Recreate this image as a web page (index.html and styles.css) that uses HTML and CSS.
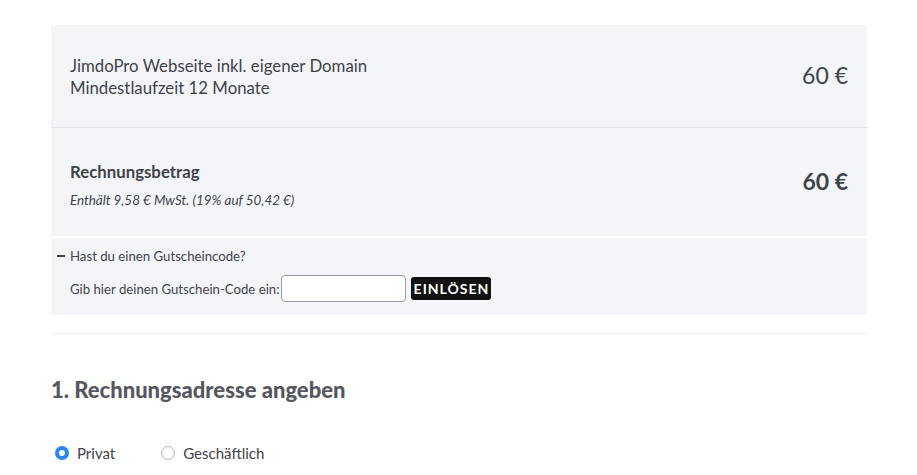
FILE: index.html
```html
<html>
  <head>
    <link rel="stylesheet" href="styles.css">
    <title>Checkout</title>
  </head>
  <body>
    <div class="summary">
      <div class="row item">
        <div class="desc">
          <div>JimdoPro Webseite inkl. eigener Domain</div>
          <div>Mindestlaufzeit 12 Monate</div>
        </div>
        <div class="price">60 €</div>
      </div>
      <div class="row total">
        <div class="desc">
          <div class="label">Rechnungsbetrag</div>
          <div class="tax">Enthält 9,58 € MwSt. (19% auf 50,42 €)</div>
        </div>
        <div class="price">60 €</div>
      </div>
    </div>
    <div class="voucher">
      <div class="toggle"><span class="dash"></span>Hast du einen Gutscheincode?</div>
      <form class="code">
        <label>Gib hier deinen Gutschein-Code ein:</label>
        <input type="text">
        <button type="button">Einlösen</button>
      </form>
    </div>
    <hr class="divider">
    <h2>1. Rechnungsadresse angeben</h2>
    <div class="choices">
      <label class="choice"><span class="radio on"></span>Privat</label>
      <label class="choice"><span class="radio"></span>Geschäftlich</label>
    </div>
  </body>
</html>
```

FILE: styles.css
```css
body {
  margin: 0;
  padding: 25px 50px 0 51px;
  font-family: Lato, "Liberation Sans", sans-serif;
  color: #3f4349;
}

.summary {
  background: #f4f5f9;
}

.row {
  display: flex;
  justify-content: space-between;
  align-items: center;
  padding: 0 19px;
}

.item {
  height: 102px;
  border-bottom: 1px solid #e3e4ee;
  font-size: 16.8px;
  line-height: 22px;
}

.item .desc {
  padding-top: 2px;
}

.item .price {
  font-size: 23px;
  margin-top: -3px;
}

.total {
  height: 108px;
}

.total .desc {
  padding-top: 5px;
}

.total .label {
  font-size: 16.8px;
  font-weight: bold;
  line-height: 20px;
}

.total .tax {
  font-size: 13.4px;
  font-style: italic;
  margin-top: 10px;
}

.total .price {
  font-size: 23px;
  font-weight: bold;
  margin-top: -3px;
}

.voucher {
  background: #f4f5f9;
  margin-top: 2px;
  height: 77px;
  padding: 0 0 0 6px;
  font-size: 13.2px;
  box-sizing: border-box;
}

.toggle {
  display: flex;
  align-items: center;
  padding-top: 10px;
  line-height: 16px;
}

.dash {
  display: inline-block;
  width: 8px;
  height: 2px;
  background: #3f4349;
  margin-right: 5px;
}

.code {
  display: flex;
  align-items: center;
  margin: 11px 0 0 13px;
}

.code label {
  margin-right: 2px;
}

.code input {
  width: 125px;
  height: 27px;
  box-sizing: border-box;
  border: 1px solid #9a9ca3;
  border-radius: 4px;
  background: #fff;
  margin: 0 5px 0 0;
}

.code button {
  height: 23px;
  width: 80px;
  background: #111;
  color: #fff;
  border: none;
  border-radius: 3px;
  font-family: Lato, "Liberation Sans", sans-serif;
  font-weight: bold;
  font-size: 14px;
  letter-spacing: 1px;
  text-transform: uppercase;
  padding: 0;
}

.divider {
  border: none;
  border-top: 1px solid #f0f0f5;
  margin: 18px 0 0;
}

h2 {
  font-size: 22px;
  font-weight: 900;
  color: #55585e;
  margin: 42px 0 0;
  line-height: 28px;
}

.choices {
  display: flex;
  margin-top: 40px;
  font-size: 15px;
}

.choice {
  display: flex;
  align-items: center;
  margin-right: 46px;
  margin-left: 4px;
}

.choice + .choice {
  margin-left: 0;
}

.radio {
  width: 14px;
  height: 14px;
  box-sizing: border-box;
  border: 1px solid #b4b6bb;
  border-radius: 50%;
  margin-right: 8px;
  background: #fff;
}

.radio.on {
  border: 4px solid #2b86f4;
}
```
